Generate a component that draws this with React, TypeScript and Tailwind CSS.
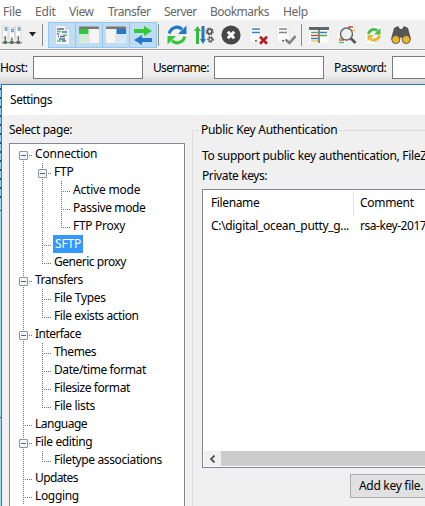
import React from 'react';

const menu: [string, string][] = [
  ['File', 'w-[32px] tracking-[-0.2px]'],
  ['Edit', 'w-[34px] tracking-[-0.2px]'],
  ['View', 'w-[39px] tracking-[-0.4px]'],
  ['Transfer', 'w-[56px] tracking-[-0.5px]'],
  ['Server', 'w-[46px] tracking-[-0.6px]'],
  ['Bookmarks', 'w-[73px] tracking-[-0.55px]'],
  ['Help', 'w-[40px] tracking-[-0.3px]'],
];

type Row = { label: string; depth: number; tr: string; box?: boolean; last?: boolean; sel?: boolean; root?: boolean };
const rows: Row[] = [
  { label: 'Connection', depth: 0, tr: 'tracking-[-0.2px]', box: true, root: true },
  { label: 'FTP', depth: 1, tr: 'tracking-[-0.2px]', box: true },
  { label: 'Active mode', depth: 2, tr: 'tracking-[-0.2px]' },
  { label: 'Passive mode', depth: 2, tr: 'tracking-[-0.4px]' },
  { label: 'FTP Proxy', depth: 2, tr: 'tracking-[-0.3px]', last: true },
  { label: 'SFTP', depth: 1, tr: 'tracking-[-0.2px]', sel: true },
  { label: 'Generic proxy', depth: 1, tr: 'tracking-[-0.48px]', last: true },
  { label: 'Transfers', depth: 0, tr: 'tracking-[-0.5px]', box: true },
  { label: 'File Types', depth: 1, tr: 'tracking-[-0.3px]' },
  { label: 'File exists action', depth: 1, tr: 'tracking-[-0.4px]', last: true },
  { label: 'Interface', depth: 0, tr: 'tracking-[-0.55px]', box: true },
  { label: 'Themes', depth: 1, tr: 'tracking-[-0.4px]' },
  { label: 'Date/time format', depth: 1, tr: 'tracking-[-0.4px]' },
  { label: 'Filesize format', depth: 1, tr: 'tracking-[-0.42px]' },
  { label: 'File lists', depth: 1, tr: 'tracking-[-0.35px]', last: true },
  { label: 'Language', depth: 0, tr: 'tracking-[-0.5px]' },
  { label: 'File editing', depth: 0, tr: 'tracking-[-0.38px]', box: true },
  { label: 'Filetype associations', depth: 1, tr: 'tracking-[-0.38px]', last: true },
  { label: 'Updates', depth: 0, tr: 'tracking-[-0.6px]' },
  { label: 'Logging', depth: 0, tr: 'tracking-[-0.35px]' },
];

const indent = ['w-[25px]', 'w-[44px]', 'w-[63px]'];

function Guides({ row }: { row: Row }) {
  const cx = 13.5 + row.depth * 19;
  const line = { stroke: '#707070', strokeDasharray: '1 1' };
  return (
    <svg height="18" className={`shrink-0 ${indent[row.depth]}`}>
      {row.depth > 0 && <line x1="13.5" x2="13.5" y1="0" y2="18" {...line} />}
      {row.depth > 1 && <line x1="32.5" x2="32.5" y1="0" y2="18" {...line} />}
      <line x1={cx} x2={cx} y1={row.root ? 10 : 0} y2={row.last ? 11 : 18} {...line} />
      <line x1={cx - 0.5} x2={cx + 8.5} y1="10.5" y2="10.5" {...line} />
      {row.box && (
        <g>
          <rect x={cx - 4} y="6.5" width="8" height="8" rx="0.5" fill="#f5f5f5" stroke="#929292" />
          <line x1={cx - 2.5} x2={cx + 2.5} y1="10.5" y2="10.5" stroke="#4b63a7" />
        </g>
      )}
    </svg>
  );
}

const Icon = ({ children }: { children: React.ReactNode }) => (
  <svg width="20" height="22" viewBox="0 0 20 22" className="shrink-0">{children}</svg>
);

const Toggle = ({ children }: { children: React.ReactNode }) => (
  <div className="-ml-px flex h-[26px] w-[28px] shrink-0 items-center justify-center border border-[#90c8f6] bg-[#c0dcf3]">{children}</div>
);

function SiteManager() {
  return (
    <Icon>
      {[0, 6.5, 13].map((x, i) => (
        <g key={x} transform={`translate(${x} ${i === 1 ? 1.5 : 0})`}>
          <rect x="0.5" y="2" width="5.5" height="12" fill="#fafafa" stroke="#d0d0d0" strokeWidth=".7" />
          <path d="M2.5 4h3M2.5 6h3" stroke="#579bd0" strokeWidth="1.4" />
          <path d="M3.3 12v5" stroke="#687568" strokeWidth="1.4" />
        </g>
      ))}
      <path d="M0 18.5h20" stroke="#7b877b" strokeWidth="1.3" />
      <path d="M1.5 18.5h3.5M8 18.5h3.5M14.5 18.5H18" stroke="#5f7562" strokeWidth="3" />
    </Icon>
  );
}

function WindowIcon({ right }: { right?: boolean }) {
  return (
    <Icon>
      <rect x="0" y="3" width="20" height="16" rx="1" fill="#f5f5f3" />
      <path d="M0 5V3.5Q0 2.5 1 2.5H19Q20 2.5 20 3.5V5Z" fill="#777" />
      {right ? (
        <><rect x="10.5" y="5" width="9.5" height="5" fill="#2878c5" /><rect x="10.5" y="10" width="9" height="8.5" fill="#d4e5f3" /></>
      ) : (
        <><rect x="0" y="5" width="9.5" height="5" fill="#32c83b" /><rect x="0" y="10" width="9.5" height="8.5" fill="#cfe9d2" /></>
      )}
      <path d="M10 10v9" stroke="#d7d7d7" />
    </Icon>
  );
}

const ServerDoc = ({ gray }: { gray?: boolean }) => (
  <Icon>
    <rect x="1" y="2" width="12" height="17" rx="1" fill="#fbfbfb" stroke="#e4e4e4" strokeWidth=".7" />
    <path d="M3 5h8M3 8.5h8" stroke={gray ? '#858585' : '#3b82c4'} strokeWidth="1.7" />
    <circle cx="7" cy="16.8" r="1" fill="#555" />
    {gray ? (
      <path d="M9.5 15.5l4 3.5 6-7" fill="none" stroke="#808080" strokeWidth="2.6" />
    ) : (
      <path d="M11 12.8l7 7M18 12.8l-7 7" stroke="#b32025" strokeWidth="2.7" />
    )}
  </Icon>
);

function Toolbar() {
  return (
    <div className="flex h-[30px] shrink-0 items-center border-b border-[#a0a0a0] bg-[#f0f0f0] pl-[2px]">
      <SiteManager />
      <svg width="7" height="5" className="ml-[7px] shrink-0"><path d="M0 0h7L3.5 4.5Z" fill="#222" /></svg>
      <div className="ml-[6px] mr-[6px] h-[22px] w-px shrink-0 bg-[#8c8c8c]" />
      <Toggle>
        <Icon>
          <path d="M4 2h9l4 4v14H4z" fill="#f4f4f2" /><path d="M13 2v4h4" fill="#d6d9da" />
          <path d="M5 5h3M5 10h2M10 8h5M7 15h6" stroke="#347cbd" strokeWidth="1.6" />
          <path d="M5 7.5h4M11 11h4M5 17h4" stroke="#61bd70" strokeWidth="1.6" />
          <path d="M8 5h4M8 12.5h5M10 17h4M6 12.5h1" stroke="#5f6780" strokeWidth="1.6" />
        </Icon>
      </Toggle>
      <Toggle><WindowIcon /></Toggle>
      <Toggle><WindowIcon right /></Toggle>
      <Toggle>
        <Icon>
          <path d="M1 5h10V2l8 5-8 5V9H1z" fill="#32cb36" />
          <path d="M19 14H9v-3l-8 5 8 5v-3h10z" fill="#2379c9" />
        </Icon>
      </Toggle>
      <div className="ml-px mr-[8px] h-[22px] w-px shrink-0 bg-[#8c8c8c]" />
      <Icon>
        <path d="M2.3 9.5A7.7 7.7 0 0 1 15 5.2" fill="none" stroke="#2379c7" strokeWidth="3.2" />
        <path d="M19.5 1.5V10H11z" fill="#2379c7" />
        <path d="M17.7 12.5A7.7 7.7 0 0 1 5 16.8" fill="none" stroke="#34c838" strokeWidth="3.2" />
        <path d="M.5 20.5V12H9z" fill="#34c838" />
      </Icon>
      <div className="w-[7px] shrink-0" />
      <Icon>
        <path d="M3.5 5v15" stroke="#33bb3b" strokeWidth="3" /><path d="M0 7l3.5-5L7 7z" fill="#33bb3b" />
        <path d="M9 2v14" stroke="#2475bd" strokeWidth="3" /><path d="M6 15l3 5 3-5z" fill="#2475bd" />
        <circle cx="15.7" cy="7.5" r="3" fill="none" stroke="#555" strokeWidth="2" strokeDasharray="1.5 .8" />
        <circle cx="15.7" cy="7.5" r="2.1" fill="none" stroke="#555" strokeWidth="1.4" />
        <circle cx="16.5" cy="15.5" r="2.3" fill="none" stroke="#555" strokeWidth="1.8" strokeDasharray="1.3 .7" />
        <circle cx="16.5" cy="15.5" r="1.5" fill="none" stroke="#555" />
      </Icon>
      <div className="w-[7px] shrink-0" />
      <Icon><circle cx="10" cy="11" r="9.6" fill="#474747" /><path d="M6.8 7.8l6.4 6.4M13.2 7.8l-6.4 6.4" stroke="#fff" strokeWidth="3" /></Icon>
      <div className="w-[8px] shrink-0" />
      <ServerDoc />
      <div className="w-[7px] shrink-0" />
      <ServerDoc gray />
      <div className="ml-[5px] mr-[7px] h-[22px] w-px shrink-0 bg-[#8c8c8c]" />
      <Icon>
        <rect x="0" y="3" width="20" height="16" fill="#fafafa" /><rect x="0" y="3" width="20" height="3" fill="#666" />
        <path d="M2 8.5h7M11 11.5h7" stroke="#4caf50" strokeWidth="1.3" /><path d="M2 11.5h7" stroke="#d43b35" strokeWidth="1.3" /><path d="M11 8.5h7M2 14.5h7" stroke="#397dbc" strokeWidth="1.3" /><path d="M2 17h7" stroke="#edc331" strokeWidth="1.3" /><path d="M10 4v15" stroke="#555" strokeWidth="1.4" />
      </Icon>
      <div className="w-[8px] shrink-0" />
      <Icon>
        <path d="M9 1h8v15H9zM1 9h7v11H1z" fill="#fff" />
        <path d="M11 3h5" stroke="#c73535" strokeWidth="1.5" /><path d="M14 6.5h4M2 14h4" stroke="#e5ba30" strokeWidth="1.5" /><path d="M2 16h5" stroke="#c73535" strokeWidth="1.3" /><path d="M2 18.5h5" stroke="#54b65a" strokeWidth="1.5" />
        <circle cx="9.5" cy="10" r="6" fill="#edf1f2" stroke="#686868" strokeWidth="1.5" /><path d="M13.8 14.3l4.7 4.7" stroke="#555" strokeWidth="2.8" />
      </Icon>
      <div className="w-[7px] shrink-0" />
      <Icon>
        <path d="M9 1h9v12H9zM1 9h10v11H1z" fill="#fcfcfc" stroke="#e5e5e5" strokeWidth=".5" />
        <path d="M4.6 10.2a5.4 5.4 0 0 1 8.8-3.6" fill="none" stroke="#42bd48" strokeWidth="2.8" /><path d="M16.5 4V10.5H10z" fill="#42bd48" />
        <path d="M15.4 11.2a5.4 5.4 0 0 1-8.8 3.6" fill="none" stroke="#e8b72d" strokeWidth="2.8" /><path d="M3.5 17.5V11h6.5z" fill="#e8b72d" />
      </Icon>
      <div className="w-[7px] shrink-0" />
      <Icon>
        <path d="M3 4l4-2 2 3h2l2-3 4 2 3 11-7 3-3-5-3 5-7-3z" fill="#555" />
        <circle cx="4.8" cy="15.5" r="4" fill="#f2b526" stroke="#595959" /><circle cx="15.2" cy="15.5" r="4" fill="#f2b526" stroke="#595959" />
      </Icon>
    </div>
  );
}

export default function App() {
  return (
    <div className="flex h-[506px] w-[425px] flex-col overflow-hidden whitespace-pre bg-[#f0f0f0] font-['Noto_Sans',sans-serif] text-[12px] leading-[18px] text-black">
      <div className="flex h-[20px] shrink-0 items-center bg-white pl-[3px] pt-[4px] text-[#666]">
        {menu.map(([t, c]) => <div key={t} className={`${c} shrink-0`}>{t}</div>)}
      </div>
      <Toolbar />
      <div className="flex h-[34px] shrink-0 items-center border-t border-white bg-linear-to-b from-[#f0f0f0] from-70% to-[#d2d2d2]">
        <div className="w-[33px] shrink-0 tracking-[-0.35px]">Host:</div>
        <div className="h-[23px] w-[110px] shrink-0 border border-[#7a7a7a] bg-white" />
        <div className="w-[71px] shrink-0 pl-[10px] tracking-[-0.65px]">Username:</div>
        <div className="h-[23px] w-[110px] shrink-0 border border-[#7a7a7a] bg-white" />
        <div className="w-[68px] shrink-0 pl-[10px] tracking-[-0.6px]">Password:</div>
        <div className="h-[23px] w-[110px] shrink-0 border border-[#7a7a7a] bg-white" />
      </div>
      <div className="flex min-h-0 flex-1">
        <div className="w-px shrink-0 bg-[#a5daf8]">
          <div className="h-[116px] bg-[repeating-linear-gradient(#8fd0f5_0_4px,#1c4a7a_4px_6px,#8fd0f5_6px_9px)]" />
          <div className="mt-[10px] h-px bg-[#1c4a7a]" />
          <div className="mt-[206px] h-px bg-[#1c4a7a]" />
        </div>
        <div className="flex min-w-0 flex-1 flex-col border-l border-t border-[#3c78b0]">
          <div className="flex h-[30px] shrink-0 items-center bg-white pl-[8px] tracking-[-0.45px]">Settings</div>
          <div className="flex min-h-0 flex-1 pl-[7px]">
            <div className="flex w-[176px] shrink-0 flex-col pt-[6px]">
              <div className="h-[22px] shrink-0 tracking-[-0.4px]">Select page:</div>
              <div className="h-[400px] shrink-0 border border-[#828790] bg-white pt-px">
                {rows.map((r) => (
                  <div key={r.label} className="flex h-[18px]">
                    <Guides row={r} />
                    <span className={`h-[18px] ${r.tr} ${r.sel ? '-ml-px bg-[#3399ff] pl-[2px] pr-[2px] text-white' : ''}`}>{r.label}</span>
                  </div>
                ))}
              </div>
            </div>
            <div className="ml-[7px] flex min-w-0 flex-1 flex-col pt-[6px]">
              <div className="flex h-[18px] shrink-0 items-center">
                <div className="mt-[9px] h-[9px] w-[7px] border-l border-t border-[#dcdcdc]" />
                <div className="px-[2px] tracking-[-0.28px]">Public Key Authentication</div>
                <div className="h-px flex-1 bg-[#dcdcdc]" />
              </div>
              <div className="flex-1 border-l border-[#dcdcdc] pl-[9px] pt-[8px]">
                <div className="h-[20px] tracking-[-0.3px]">To support public key authentication, FileZ</div>
                <div className="h-[22px] tracking-[-0.4px]">Private keys:</div>
                <div className="flex h-[279px] w-[300px] flex-col border border-[#828790] bg-white p-px">
                  <div className="flex h-[25px]">
                    <div className="w-[150px] border-r border-[#e5e5e5] pl-[7px] pt-[3px] tracking-[-0.38px]">Filename</div>
                    <div className="pl-[6px] pt-[3px] tracking-[-0.3px]">Comment</div>
                  </div>
                  <div className="flex flex-1 pt-px">
                    <div className="w-[150px] pl-[7px] tracking-[-0.33px]">C:\digital_ocean_putty_g...</div>
                    <div className="pl-[6px] tracking-[-0.45px]">rsa-key-2017</div>
                  </div>
                  <div className="flex h-[15px] bg-[#cdcdcd]">
                    <div className="flex w-[17px] items-center justify-center bg-[#f0f0f0]">
                      <svg width="7" height="8"><path d="M5.5 0.5L2 4l3.5 3.5" fill="none" stroke="#505050" strokeWidth="1.8" /></svg>
                    </div>
                  </div>
                </div>
                <div className="ml-[148px] mt-[6px] h-[24px] w-[100px] border border-[#adadad] bg-[#e1e1e1] pl-[8px] pt-[2px] tracking-[-0.3px]">Add key file.</div>
              </div>
            </div>
          </div>
        </div>
      </div>
    </div>
  );
}
